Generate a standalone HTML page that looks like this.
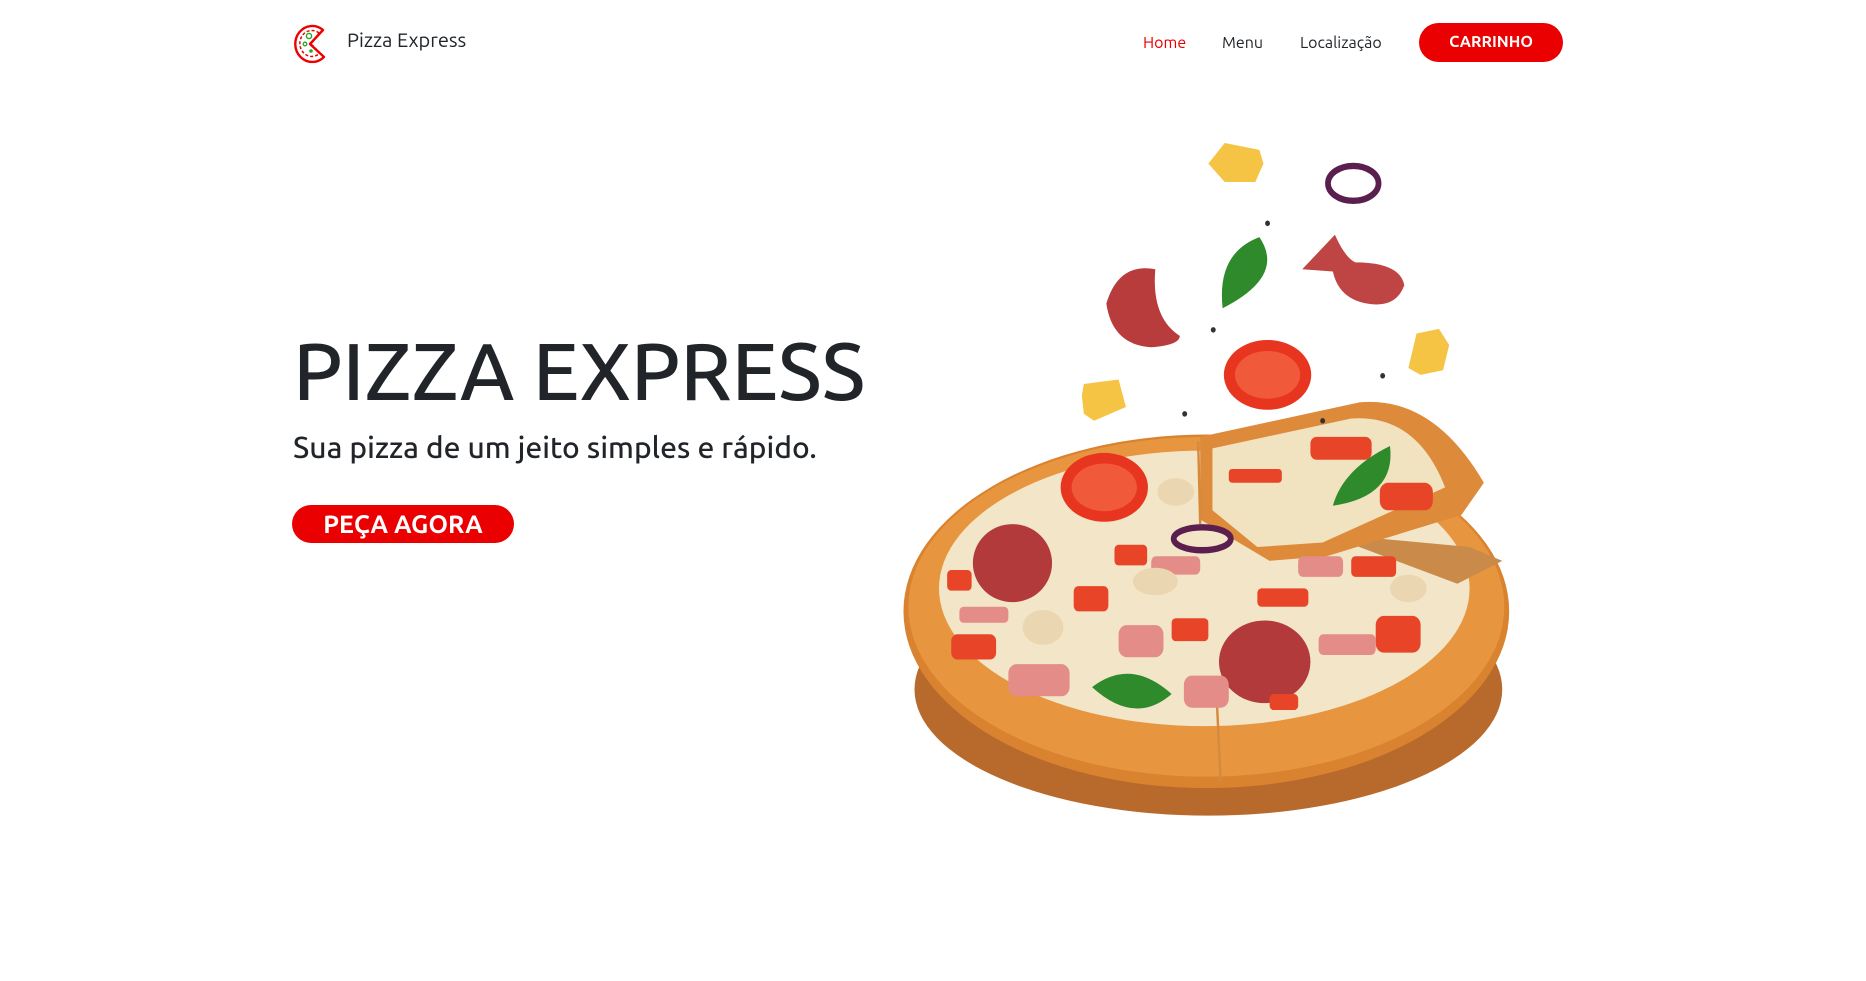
<!DOCTYPE html>
<html><head><meta charset="utf-8"><style>
html,body{margin:0;padding:0;width:1866px;height:981px;overflow:hidden;background:#fff;font-family:"Ubuntu","Liberation Sans",sans-serif;color:#212529}
.abs{position:absolute}
.brand{left:347px;top:28px;font-size:20px;color:#212529;white-space:nowrap}
.nav{top:34px;font-size:16px;white-space:nowrap}
.btn{background:#ea0000;color:#fff;font-weight:bold;border-radius:22px;text-align:center}
h1{margin:0;position:absolute;left:293px;top:331px;font-size:81px;font-weight:500;line-height:1;letter-spacing:-0.3px;white-space:nowrap;color:#212529}
.sub{left:293px;top:432px;font-size:30px;font-weight:500;line-height:1;white-space:nowrap}
</style></head><body>
<svg class="abs" style="left:293px;top:22px" width="36" height="42" viewBox="0 0 36 42">
<path d="M30 8 A17 18 0 1 0 31 35 L17 22 Z" fill="none" stroke="#e00" stroke-width="2.4" stroke-linejoin="round"/>
<path d="M26 11 A12 13 0 1 0 27 31 L18 22 Z" fill="none" stroke="#e00" stroke-width="1.5" stroke-dasharray="3 2"/>
<circle cx="16" cy="14" r="2.6" fill="none" stroke="#2a2" stroke-width="1.4"/>
<circle cx="12" cy="22" r="1.8" fill="none" stroke="#2a2" stroke-width="1.3"/>
<circle cx="18" cy="29" r="1.8" fill="#2a2"/>
</svg>
<div class="abs brand">Pizza Express</div>
<div class="abs nav" style="left:1143px;color:#ea0000">Home</div>
<div class="abs nav" style="left:1222px">Menu</div>
<div class="abs nav" style="left:1300px">Localização</div>
<div class="abs btn" style="left:1419px;top:23px;width:144px;height:39px;line-height:39px;font-size:16px">CARRINHO</div>
<h1>PIZZA EXPRESS</h1>
<div class="abs sub">Sua pizza de um jeito simples e rápido.</div>
<div class="abs btn" style="left:292px;top:505px;width:222px;height:38px;line-height:38px;font-size:25px">PEÇA AGORA</div>

<svg class="abs" style="left:890px;top:120px" width="640" height="720" viewBox="0 0 1568 1568" preserveAspectRatio="none">
<ellipse cx="780" cy="1240" rx="720" ry="275" fill="#b8692c"/>
<ellipse cx="775" cy="1070" rx="742" ry="385" fill="#d9822f"/>
<ellipse cx="775" cy="1060" rx="730" ry="370" fill="#e8953f"/>
<ellipse cx="770" cy="1020" rx="650" ry="300" fill="#f3e6c8"/>
<path d="M1060 900 L1420 930 L1500 960 L1390 1010 Z" fill="#c98a4a"/>
<path d="M760 690 L1150 615 Q1330 600 1455 790 L1400 860 L1070 950 L930 960 L760 870 Z" fill="#dd8a3a"/>
<path d="M790 715 L1130 650 Q1290 640 1360 800 L1060 920 L900 930 L790 850 Z" fill="#f1e2c0"/>
<line x1="755" y1="700" x2="760" y2="880" stroke="#d58a3e" stroke-width="6"/>
<line x1="800" y1="1250" x2="810" y2="1440" stroke="#d58a3e" stroke-width="6"/>
<ellipse cx="525" cy="800" rx="107" ry="75" fill="#e8351f"/>
<ellipse cx="525" cy="800" rx="80" ry="52" fill="#f05a3a"/>
<ellipse cx="300" cy="965" rx="97" ry="85" fill="#b23a3a"/>
<ellipse cx="918" cy="1180" rx="112" ry="90" fill="#b23a3a"/>
<ellipse cx="765" cy="912" rx="70" ry="25" fill="none" stroke="#5a1f4e" stroke-width="14"/>
<path d="M495 1235 Q590 1170 690 1250 Q600 1320 495 1235 Z" fill="#2e8a2a"/>
<path d="M1085 840 Q1110 760 1225 710 Q1240 820 1085 840 Z" fill="#2e8a2a"/>
<g fill="#e84528">
<rect x="150" y="1120" width="110" height="55" rx="15"/><rect x="450" y="1015" width="85" height="55" rx="12"/>
<rect x="550" y="925" width="80" height="45" rx="10"/><rect x="1130" y="950" width="110" height="45" rx="10"/>
<rect x="1190" y="1080" width="110" height="80" rx="20"/><rect x="140" y="980" width="60" height="45" rx="10"/>
<rect x="690" y="1085" width="90" height="50" rx="10"/><rect x="830" y="760" width="130" height="30" rx="8"/>
<rect x="1200" y="790" width="130" height="60" rx="20"/><rect x="1030" y="690" width="150" height="50" rx="15"/>
<rect x="900" y="1020" width="125" height="40" rx="10"/><rect x="930" y="1250" width="70" height="35" rx="10"/>
</g>
<g fill="#e38c88">
<rect x="170" y="1060" width="120" height="35" rx="10"/><rect x="560" y="1100" width="110" height="70" rx="20"/>
<rect x="290" y="1185" width="150" height="70" rx="20"/><rect x="1050" y="1120" width="140" height="45" rx="12"/>
<rect x="720" y="1210" width="110" height="70" rx="20"/><rect x="1000" y="950" width="110" height="45" rx="12"/>
<rect x="640" y="950" width="120" height="40" rx="12"/>
</g>
<g fill="#ead6b0">
<ellipse cx="375" cy="1105" rx="50" ry="38"/><ellipse cx="650" cy="1005" rx="55" ry="30"/><ellipse cx="1270" cy="1020" rx="45" ry="30"/><ellipse cx="700" cy="810" rx="45" ry="30"/>
</g>
<path d="M780 95 L820 50 L905 65 L915 95 L895 135 L820 135 Z" fill="#f6c445"/>
<ellipse cx="1135" cy="138" rx="62" ry="38" fill="none" stroke="#5a1f4e" stroke-width="14"/>
<path d="M815 410 Q800 290 905 255 Q970 340 815 410 Z" fill="#2e8a2a"/>
<path d="M650 325 Q560 310 530 400 Q545 490 640 495 Q710 490 710 470 Q640 430 650 325 Z" fill="#b83c3c"/>
<path d="M1010 325 L1090 250 Q1115 300 1140 310 Q1250 310 1260 360 Q1240 410 1170 400 Q1100 390 1085 330 Z" fill="#bf4444"/>
<ellipse cx="925" cy="555" rx="107" ry="76" fill="#e8351f"/>
<ellipse cx="925" cy="555" rx="80" ry="52" fill="#f05a3a"/>
<path d="M1270 540 L1290 465 L1345 455 L1370 490 L1355 545 L1300 555 Z" fill="#f6c445"/>
<path d="M470 600 L475 575 L560 565 L578 625 L500 655 L475 640 Z" fill="#f6c445"/>
<g fill="#333"><circle cx="925" cy="225" r="6"/><circle cx="792" cy="457" r="6"/><circle cx="1207" cy="557" r="6"/><circle cx="722" cy="640" r="6"/><circle cx="1060" cy="655" r="6"/></g>
</svg>
</body></html>
